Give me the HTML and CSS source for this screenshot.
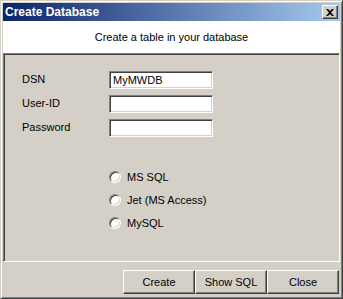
FILE: index.html
```html
<!DOCTYPE html>
<html lang="en">
<head>
  <meta charset="UTF-8" />
  <title>Create Database</title>
  <link rel="stylesheet" href="styles.css">
</head>
<body>
  <div class="window">
    <div class="titlebar">
      <span class="title">Create Database</span>
      <button class="close-btn" aria-label="Close">
        <svg width="8" height="7" viewBox="0 0 8 7">
          <path d="M0 0h2l2 2 2-2h2L5 3.5 8 7H6L4 5 2 7H0l3-3.5z" fill="#000"/>
        </svg>
      </button>
    </div>

    <div class="header">Create a table in your database</div>

    <div class="panel">
      <div class="fields">
        <label class="field-label">DSN</label>
        <div class="textbox">MyMWDB</div>
        <label class="field-label">User-ID</label>
        <div class="textbox"></div>
        <label class="field-label">Password</label>
        <div class="textbox"></div>
      </div>

      <div class="radios">
        <div class="radio-row"><span class="radio"></span>MS SQL</div>
        <div class="radio-row"><span class="radio"></span>Jet (MS Access)</div>
        <div class="radio-row"><span class="radio"></span>MySQL</div>
      </div>
    </div>

    <div class="footer">
      <button class="btn">Create</button>
      <button class="btn">Show SQL</button>
      <button class="btn">Close</button>
    </div>
  </div>
</body>
</html>
```

FILE: styles.css
```css
body {
  margin: 0;
  padding: 0;
  background: #d4d0c8;
  font-family: 'Liberation Sans', Arial, sans-serif;
  font-size: 11px;
  color: #000;
}
.window {
  width: 343px;
  height: 299px;
  box-sizing: border-box;
  border-top: 1px solid #d4d0c8;
  border-left: 1px solid #d4d0c8;
  border-right: 1px solid #404040;
  border-bottom: 1px solid #404040;
  box-shadow: inset 1px 1px #fff, inset -1px -1px #808080;
  padding: 2px;
  display: flex;
  flex-direction: column;
  background: #d4d0c8;
}
.titlebar {
  height: 18px;
  flex: none;
  background: linear-gradient(to right, #0a246a, #a6caf0);
  display: flex;
  align-items: center;
  justify-content: space-between;
  padding: 0 2px 0 2px;
}
.title {
  color: #fff;
  font-weight: bold;
  font-size: 12px;
}
.close-btn {
  width: 16px;
  height: 14px;
  padding: 0;
  margin: 0;
  background: #d4d0c8;
  border: 1px solid;
  border-color: #fff #404040 #404040 #fff;
  box-shadow: inset -1px -1px #808080;
  display: flex;
  align-items: center;
  justify-content: center;
}
.header {
  height: 32px;
  flex: none;
  background: #fff;
  display: flex;
  align-items: center;
  justify-content: center;
}
.panel {
  height: 209px;
  flex: none;
  box-sizing: border-box;
  border-top: 1px solid #808080;
  border-left: 1px solid #808080;
  border-right: 1px solid #fff;
  border-bottom: 1px solid #fff;
  box-shadow: inset 1px 1px #404040;
  padding: 17px 0 0 18px;
}
.fields {
  display: grid;
  grid-template-columns: 87px 104px;
  row-gap: 6px;
  align-items: center;
}
.field-label {
  line-height: 14px;
  margin-top: -2px;
}
.textbox {
  height: 18px;
  box-sizing: border-box;
  background: #fff;
  border: 1px solid;
  border-color: #808080 #fff #fff #808080;
  box-shadow: inset 1px 1px #404040, inset -1px -1px #d4d0c8;
  padding: 2px 3px;
  line-height: 13px;
}
.radios {
  margin: 28px 0 0 87px;
  display: flex;
  flex-direction: column;
}
.radio-row {
  height: 23px;
  display: flex;
  align-items: center;
  gap: 6px;
}
.radio {
  width: 12px;
  height: 12px;
  box-sizing: border-box;
  border-radius: 50%;
  background: #fff;
  border: 1px solid;
  border-color: #808080 #fff #fff #808080;
  box-shadow: inset 1px 1px #404040, inset -1px -1px #d4d0c8;
}
.footer {
  flex: 1;
  display: flex;
  justify-content: flex-end;
  align-items: flex-start;
  padding: 8px 1px 0 0;
}
.btn {
  width: 72px;
  height: 24px;
  margin: 0;
  padding: 0;
  background: #d4d0c8;
  font-family: 'Liberation Sans', Arial, sans-serif;
  font-size: 11px;
  color: #000;
  border: 1px solid;
  border-color: #fff #404040 #404040 #fff;
  box-shadow: inset -1px -1px #808080;
}
```
